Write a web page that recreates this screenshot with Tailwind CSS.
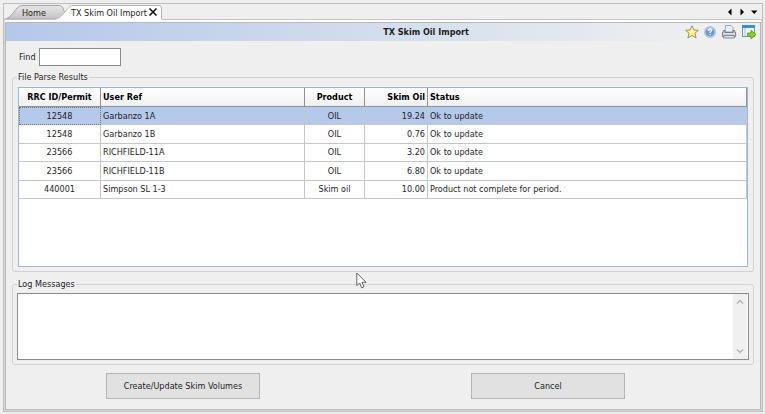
<!DOCTYPE html>
<html lang="en">
<head>
    <meta charset="UTF-8">
    <meta name="viewport" content="width=device-width, initial-scale=1.0">
    <script src="https://cdn.jsdelivr.net/npm/@tailwindcss/browser@4"></script>
    <title>TX Skim Oil Import</title>
</head>
<body class="bg-[#efefef] text-[#1e1e1e] font-['DejaVu_Sans_Condensed','DejaVu_Sans',sans-serif] text-[9px] leading-3">
    <main class="flex flex-col min-h-screen pt-[3px] pl-[3px] pr-[2px] pb-[2px]">
        <div class="flex flex-col flex-1 border border-[#bdbdbd]">
            <!-- tab strip -->
            <nav class="flex justify-between h-[15px] pl-px">
                <div class="flex items-end">
                    <a href="#home" class="relative h-[14px] w-[51px] pl-[17px] pt-0.5">
                        <svg class="absolute left-0 top-0" width="66" height="14" viewBox="0 0 66 14">
                            <defs>
                                <linearGradient id="tab" x1="0" y1="0" x2="0" y2="1">
                                    <stop offset="0" stop-color="#e6e6e6"/>
                                    <stop offset="1" stop-color="#c4c4c4"/>
                                </linearGradient>
                            </defs>
                            <path d="M0.500 14C7 12 10 4 14 1.500Q15 .5 17 .5H54Q57 .5 58 3L62 14Z" fill="url(#tab)" stroke="#a5a5a5"/>
                        </svg>
                        <span class="relative">Home</span>
                    </a>
                    <div class="relative z-10 flex h-[14px] w-[106px] pl-[15px] pt-0.5">
                        <svg class="absolute left-0 top-0" width="106" height="17" viewBox="0 0 106 17">
                            <path d="M0 17V14C7 12 10 4 14 1.500Q15 .5 17 .5H103Q105.500 .5 105.500 3V17Z" fill="#fff"/>
                            <path d="M0 14C7 12 10 4 14 1.500Q15 .5 17 .5H103Q105.500 .5 105.500 3V14" fill="none" stroke="#b4b4b4"/>
                        </svg>
                        <a href="#import" class="relative flex-1 min-w-0 whitespace-nowrap">TX Skim Oil Import</a>
                        <button class="relative mr-1 size-[10px] shrink-0" aria-label="Close tab">
                            <svg width="10" height="10" viewBox="0 0 10 10"><path d="M1.500 1.500L8.500 8.500M8.500 1.500L1.500 8.500" stroke="#111" stroke-width="1.600"/></svg>
                        </button>
                    </div>
                </div>
                <div class="flex items-center gap-1 pr-1">
                    <button aria-label="Previous tab" class="size-2"><svg width="8" height="8" viewBox="0 0 8 8"><path d="M5.500 .5V7.500L2 4Z"/></svg></button>
                    <button aria-label="Next tab" class="size-2"><svg width="8" height="8" viewBox="0 0 8 8"><path d="M2.500 .5V7.500L6 4Z"/></svg></button>
                    <button aria-label="Tab list" class="size-2"><svg width="8" height="8" viewBox="0 0 8 8"><path d="M1 2.500H7.500L4.200 6Z"/></svg></button>
                </div>
            </nav>
            <section class="flex flex-col flex-1 border-t border-[#c4c4c4] bg-[#d9d9d9] px-px pb-px">
                <div class="h-0.5 bg-white"></div>
                <div class="flex flex-col flex-1 border border-[#b8b8b8] bg-[#efefef]">
                    <!-- title bar -->
                    <header class="flex items-center h-[18px] pl-[161px] pr-[3px] bg-linear-to-r from-[#b4c8ea] to-[#efefef] to-92%">
                        <h1 class="flex-1 text-center font-bold">TX Skim Oil Import</h1>
                        <div class="flex items-center gap-1">
                            <button aria-label="Favorite" class="size-[14px]">
                                <svg width="14" height="14" viewBox="0 0 14 14"><path d="M7 .8L8.900 5L13.300 5.300L10 8.300L11.100 12.900L7 10.500L2.900 12.900L4 8.300L.7 5.300L5.100 5Z" fill="#fdf17a" stroke="#8c8664" stroke-width=".9"/><path d="M7 3L8 6L5 9Z" fill="#fffde0"/></svg>
                            </button>
                            <button aria-label="Help" class="size-[14px]">
                                <svg width="14" height="14" viewBox="0 0 14 14"><circle cx="7" cy="7" r="5.600" fill="#a9c4e8" stroke="#b3c1d6" stroke-width=".8"/><circle cx="7" cy="7" r="4.300" fill="#6c97d2"/><path d="M3.500 5Q7 0 10.500 5Q7 7 3.500 5Z" fill="#b4cff0"/><path d="M5.500 5.600Q5.700 4 7.100 4Q8.700 4.100 8.600 5.500Q8.400 6.500 7.100 7.200V8.100M7.100 9V10.200" fill="none" stroke="#fff" stroke-width="1.200"/></svg>
                            </button>
                            <button aria-label="Print" class="size-4">
                                <svg width="16" height="16" viewBox="0 0 16 16"><path d="M4 8L4.500 1.500H10L12 3.500V8Z" fill="#e6effa" stroke="#8d9bb0" stroke-width=".9"/><path d="M2.500 6.500H4V8.500H12V6.500H13.500L14.600 9V12.500H1.400V9Z" fill="#b9bcc4" stroke="#6f747e" stroke-width=".9"/><path d="M2 9.800H14" stroke="#eef0f4"/><path d="M3 11.500H13L13.500 14H2.500Z" fill="#cfe0f3" stroke="#747b87" stroke-width=".8"/></svg>
                            </button>
                            <button aria-label="Export" class="size-4">
                                <svg width="16" height="16" viewBox="0 0 16 16"><rect x="1.500" y="1.500" width="12" height="11" fill="#e9f4fc" stroke="#5d9ac9"/><path d="M1 1H14V4H1Z" fill="#3e8fca"/><path d="M4 4V12" stroke="#9cc5e3"/><path d="M6.500 9H10V6.300L15 10.600L10 14.900V12.200H6.500Z" fill="#8fd021" stroke="#5b9411" stroke-width=".8"/></svg>
                            </button>
                        </div>
                    </header>
                    <div class="flex flex-col flex-1 px-[6px]">
                        <div class="flex items-center pt-[7px] pl-[7px]">
                            <label for="find" class="w-5">Find</label>
                            <input id="find" type="text" class="h-[18px] w-[82px] border border-[#8b8b8b] bg-white px-1">
                        </div>
                        <!-- parse results -->
                        <fieldset class="mt-[5px] rounded-[3px] border border-[#d2d2d2] px-[5px] pb-1">
                            <legend class="px-px -ml-px">File Parse Results</legend>
                            <div class="mt-1 min-h-[180px] border border-[#9db8d2] bg-white">
                                <table class="w-full h-[111px] table-fixed border-separate border-spacing-0">
                                    <colgroup>
                                        <col class="w-[82px]">
                                        <col class="w-[204px]">
                                        <col class="w-[60px]">
                                        <col class="w-[63px]">
                                        <col>
                                    </colgroup>
                                    <thead class="bg-linear-to-b from-white to-[#efefef] font-bold text-black">
                                        <tr class="h-[19px] *:border-r *:border-b *:border-[#8e9297] *:px-0.5 *:py-0 *:whitespace-nowrap">
                                            <th class="text-center">RRC ID/Permit</th>
                                            <th class="text-left">User Ref</th>
                                            <th class="text-center">Product</th>
                                            <th class="text-right">Skim Oil</th>
                                            <th class="text-left">Status</th>
                                        </tr>
                                    </thead>
                                    <tbody class="[&_td]:border-r [&_td]:border-b [&_td]:border-[#c6c6c6] [&_td]:px-0.5 [&_td]:py-0 [&_td]:whitespace-nowrap">
                                        <tr class="bg-[#b5c9ea]">
                                            <td class="text-center outline outline-dotted -outline-offset-1 outline-[#6f7680]">12548</td>
                                            <td>Garbanzo 1A</td>
                                            <td class="text-center">OIL</td>
                                            <td class="text-right">19.24</td>
                                            <td>Ok to update</td>
                                        </tr>
                                        <tr>
                                            <td class="text-center">12548</td>
                                            <td>Garbanzo 1B</td>
                                            <td class="text-center">OIL</td>
                                            <td class="text-right">0.76</td>
                                            <td>Ok to update</td>
                                        </tr>
                                        <tr>
                                            <td class="text-center">23566</td>
                                            <td>RICHFIELD-11A</td>
                                            <td class="text-center">OIL</td>
                                            <td class="text-right">3.20</td>
                                            <td>Ok to update</td>
                                        </tr>
                                        <tr>
                                            <td class="text-center">23566</td>
                                            <td>RICHFIELD-11B</td>
                                            <td class="text-center">OIL</td>
                                            <td class="text-right">6.80</td>
                                            <td>Ok to update</td>
                                        </tr>
                                        <tr>
                                            <td class="text-center">440001</td>
                                            <td>Simpson SL 1-3</td>
                                            <td class="text-center">Skim oil</td>
                                            <td class="text-right">10.00</td>
                                            <td>Product not complete for period.</td>
                                        </tr>
                                    </tbody>
                                </table>
                            </div>
                        </fieldset>
                        <!-- log -->
                        <fieldset class="mt-[6px] rounded-[3px] border border-[#d2d2d2] px-1 pb-1">
                            <legend class="px-px"><label for="log">Log Messages</label></legend>
                            <div class="flex mt-[3px] h-[67px] border border-[#8b8b8b] bg-white">
                                <textarea id="log" class="flex-1 resize-none outline-none p-1"></textarea>
                                <div class="flex flex-col justify-between w-[14px] py-1 mr-px bg-[#f0f0f0]">
                                    <button aria-label="Scroll up" class="h-2"><svg class="mx-auto" width="8" height="8" viewBox="0 0 8 8"><path d="M1 5.500L4 2.500L7 5.500" fill="none" stroke="#b4b4b4" stroke-width="1.500"/></svg></button>
                                    <button aria-label="Scroll down" class="h-2"><svg class="mx-auto" width="8" height="8" viewBox="0 0 8 8"><path d="M1 2.500L4 5.500L7 2.500" fill="none" stroke="#b4b4b4" stroke-width="1.500"/></svg></button>
                                </div>
                            </div>
                        </fieldset>
                        <div class="flex justify-between pt-2 pl-[94px] pr-[129px]">
                            <button class="h-[26px] w-[154px] border border-[#b5b5b5] bg-[#e1e1e1]">Create/Update Skim Volumes</button>
                            <button class="h-[26px] w-[154px] border border-[#b5b5b5] bg-[#e1e1e1]">Cancel</button>
                        </div>
                    </div>
                </div>
            </section>
        </div>
    </main>
    <!-- mouse pointer -->
    <svg class="absolute left-[356px] top-[272px] pointer-events-none" width="12" height="18" viewBox="0 0 12 18"><path d="M.8 1V13.600L3.700 11L5.700 15.800L8 14.800L6 10.300H10Z" fill="#fff" stroke="#555" stroke-width=".9"/></svg>
</body>
</html>
